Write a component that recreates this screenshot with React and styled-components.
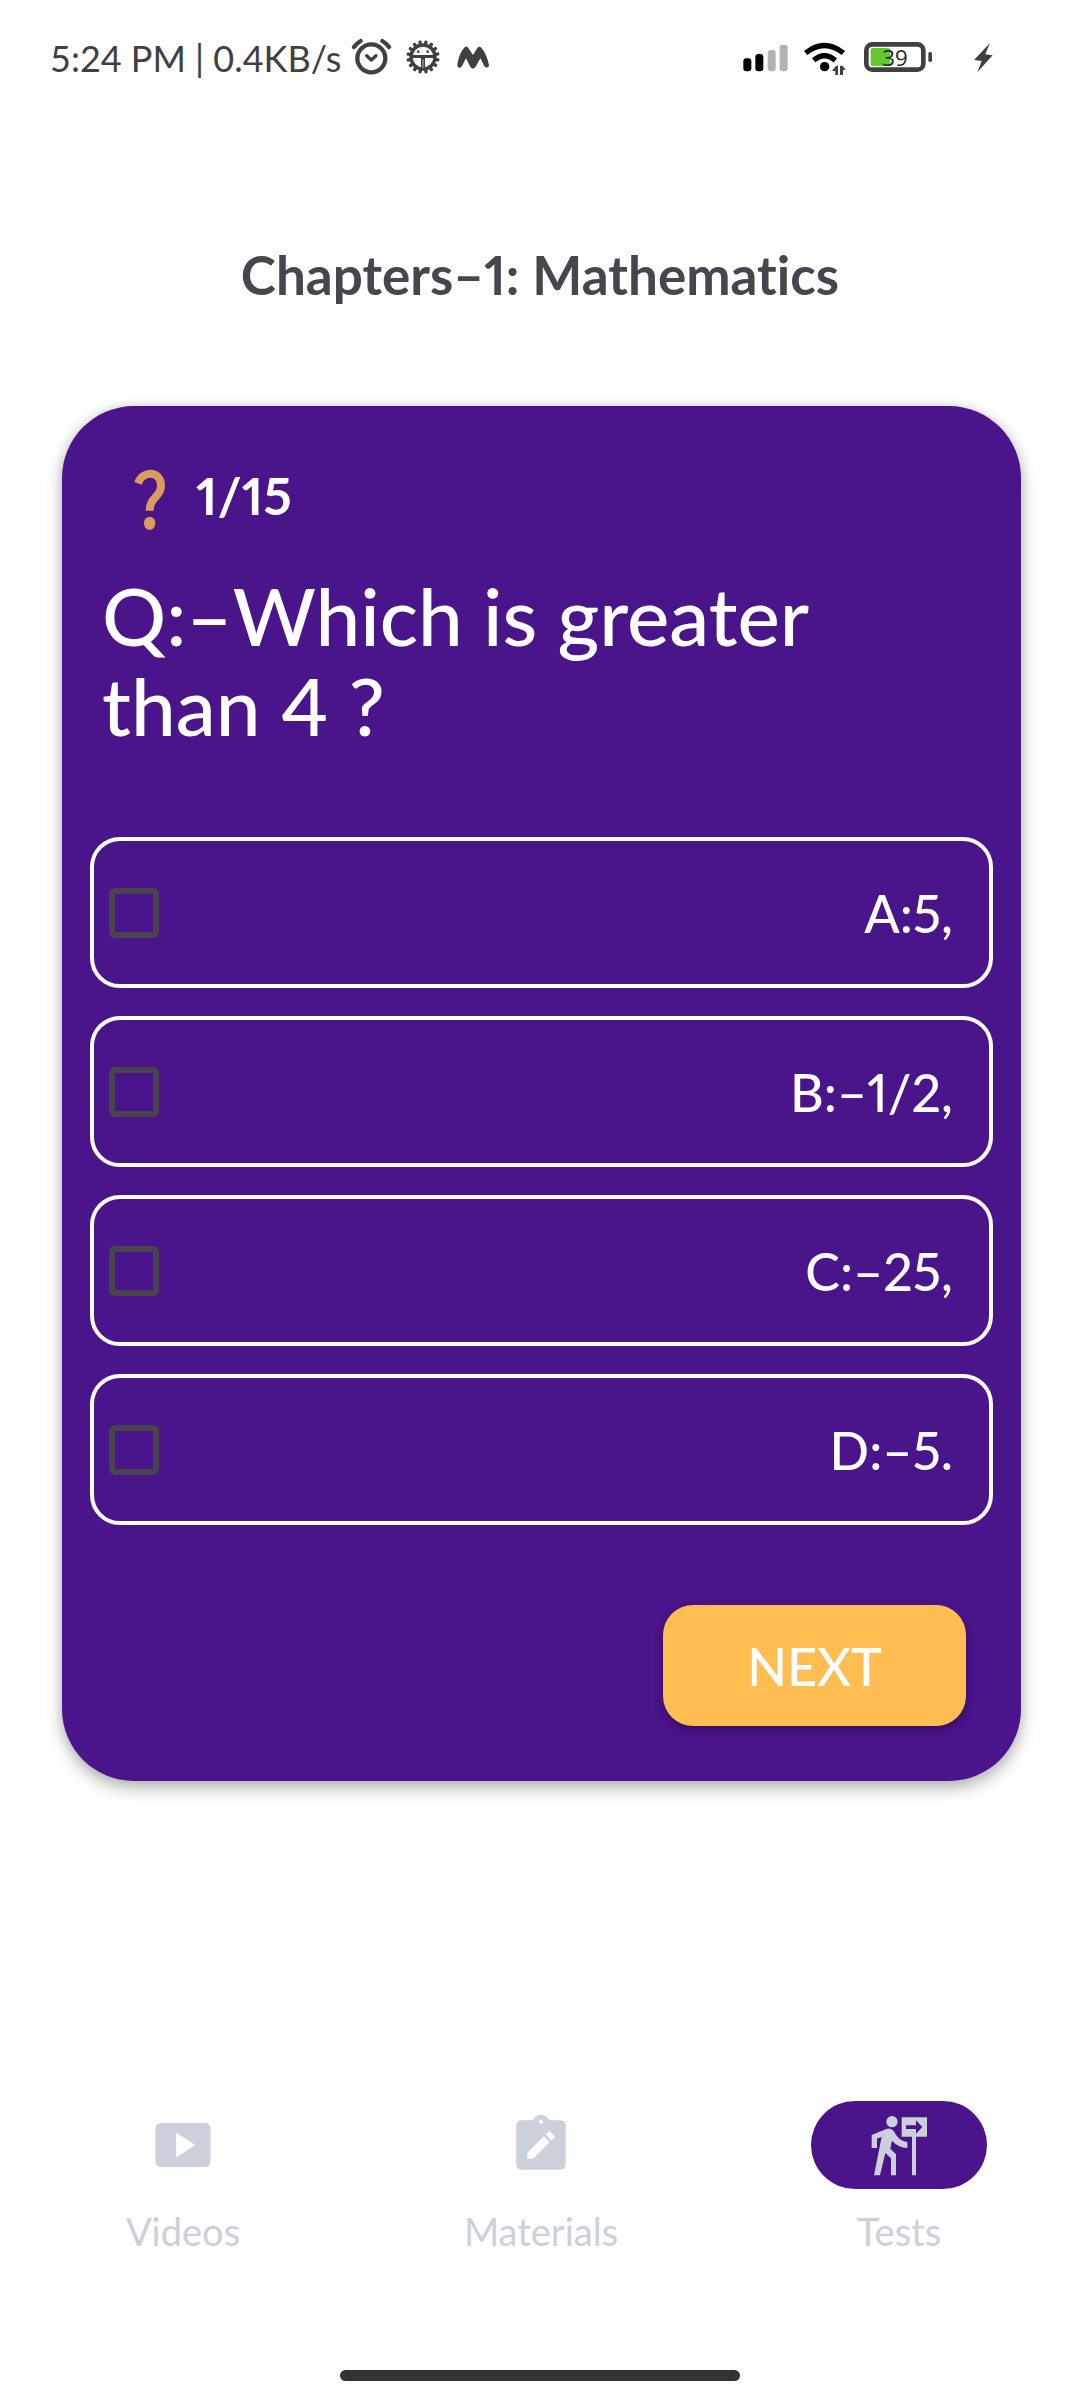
import React from "react";
import styled, { createGlobalStyle } from "styled-components";

const GlobalStyle = createGlobalStyle`
  *, *::before, *::after { box-sizing: border-box; }
  body {
    margin: 0;
    background: #fefefe;
    font-family: Lato, "Open Sans", sans-serif;
    font-variant-ligatures: none;
    font-variant-numeric: proportional-nums;
  }
`;

const Page = styled.div`
  min-height: 100vh;
  display: flex;
  flex-direction: column;
`;

const StatusBar = styled.div`
  height: 116px;
  padding: 0 80px 0 50px;
  display: flex;
  align-items: center;
  justify-content: space-between;
  color: #404040;
`;

const StatusGroup = styled.div`
  display: flex;
  align-items: center;
  gap: 8px;
`;

const StatusText = styled.span`
  font-size: 36px;
  line-height: 44px;
  white-space: nowrap;
  font-variant-numeric: tabular-nums;
`;

const StatusIcons = styled.svg`
  display: block;
  width: ${(p) => p.$width}px;
  height: 60px;
`;

const Title = styled.h1`
  margin: 127px 40px 99px;
  font-size: 53px;
  line-height: 64px;
  font-weight: 700;
  text-align: center;
  color: #49454f;
`;

const Main = styled.main`
  padding: 0 59px 0 62px;
`;

const Card = styled.form`
  display: flex;
  flex-direction: column;
  padding: 64px 28px 55px;
  border-radius: 72px;
  background: #4a148a;
  color: #ffffff;
  box-shadow: 0 8px 16px rgba(0, 0, 0, 0.24), 0 0 12px rgba(0, 0, 0, 0.14);
`;

const Progress = styled.div`
  height: 60px;
  padding-left: 42px;
  display: flex;
  align-items: center;
  gap: 28px;
`;

const QuestionMark = styled.svg`
  width: 36px;
  height: 62px;
`;

const Count = styled.span`
  font-size: 52px;
  line-height: 52px;
  padding-bottom: 10px;
  font-weight: 700;
`;

const Question = styled.h2`
  margin: 40px 80px 87px 12px;
  font-size: 80px;
  line-height: 90px;
  font-weight: 500;
`;

const Options = styled.div`
  display: flex;
  flex-direction: column;
  gap: 28px;
`;

const Option = styled.label`
  height: 151px;
  padding: 0 36px 0 15px;
  display: flex;
  align-items: center;
  justify-content: space-between;
  border: 4px solid #ffffff;
  border-radius: 30px;
  font-size: 52px;
  line-height: 64px;
  font-weight: 500;
  cursor: pointer;
`;

const Checkbox = styled.input`
  appearance: none;
  margin: 0;
  width: 50px;
  height: 50px;
  border: 6px solid #49454f;
  border-radius: 6px;
  &:checked {
    background: #ffbd52;
  }
`;

const NextButton = styled.button`
  align-self: flex-end;
  width: 303px;
  height: 121px;
  margin: 80px 27px 0 0;
  padding: 0;
  border: 0;
  border-radius: 30px;
  background: #ffbd52;
  color: #ffffff;
  font-family: inherit;
  font-size: 52px;
  font-weight: 500;
  box-shadow: 0 4px 8px rgba(0, 0, 0, 0.3);
  cursor: pointer;
`;

const Nav = styled.nav`
  margin-top: auto;
  padding: 40px 2px 0 4px;
  display: grid;
  grid-template-columns: repeat(3, 1fr);
`;

const NavLink = styled.a`
  display: flex;
  flex-direction: column;
  align-items: center;
  gap: 22px;
  color: #cbd0da;
  font-size: 38px;
  line-height: 40px;
  text-decoration: none;
`;

const Pill = styled.span`
  width: 176px;
  height: 88px;
  display: flex;
  align-items: center;
  justify-content: center;
  border-radius: 44px;
  background: ${(p) => (p.$active ? "#4a148a" : "transparent")};
`;

const NavIcon = styled.svg`
  width: 66px;
  height: 66px;
  fill: currentColor;
`;

const HomeBar = styled.div`
  width: 37%;
  height: 11px;
  margin: 119px auto 19px;
  border-radius: 6px;
  background: #333333;
`;

function LeftStatusIcons() {
  const teeth = Array.from({ length: 16 }, (_, i) => i * 22.5);
  return (
    <StatusIcons $width={144} viewBox="960 24 432 180" aria-hidden="true">
      <g fill="none" stroke="#404040" strokeWidth="13" strokeLinecap="round" strokeLinejoin="round">
        <circle cx="1027" cy="115" r="42" />
        <path d="M1013 107l14 13 14-13" strokeWidth="10" />
        <path d="M975 81q8-11 20-18M1080 81q-8-11-20-18" />
      </g>
      <circle cx="1182" cy="111" r="36" fill="none" stroke="#404040" strokeWidth="10" />
      {teeth.map((a) => (
        <rect key={a} x="1177" y="61" width="10" height="14" rx="4" fill="#404040" transform={`rotate(${a + 11} 1182 111)`} />
      ))}
      <path d="M1148 105h68v9h-28v34h-12v-34h-28z" fill="#404040" />
      <path d="M1182 118v26" stroke="#fefefe" strokeWidth="2" />
      <circle cx="1168" cy="95" r="4" fill="#404040" />
      <circle cx="1196" cy="95" r="4" fill="#404040" />
      <path
        fill="#404040"
        d="M1285 136c2-20 10-42 22-54 4-4 8-3 11 2l14 21 13-21c4-5 8-5 12-1 12 14 20 34 23 53 0 8-10 9-14 2l-12-23-14 25c-4 7-12 7-16 0l-13-25-12 23c-4 8-14 7-14-2z"
      />
    </StatusIcons>
  );
}

function RightStatusIcons() {
  return (
    <StatusIcons $width={260} viewBox="60 24 780 180" aria-label="Battery 39 percent, charging" role="img">
      <rect x="70" y="115" width="24" height="39" rx="9" />
      <rect x="106" y="102" width="24" height="52" rx="9" />
      <rect x="143" y="90" width="24" height="64" rx="9" fill="#b3b3b3" />
      <rect x="179" y="74" width="24" height="80" rx="9" fill="#b3b3b3" />
      <path d="M257 99Q313 54 370 99M281 121Q313 94 346 121" fill="none" stroke="#000" strokeWidth="16" />
      <circle cx="314" cy="140" r="14" />
      <path d="M336 153l12-16h6v28h-8v-12zM378 149h-9v16h-9v-28h7z" fill="#404040" />
      <rect x="439" y="73" width="171" height="76" rx="18" fill="none" stroke="#404040" strokeWidth="14" />
      <rect x="452" y="84" width="59" height="54" rx="6" fill="#64c92c" />
      <text x="525" y="137" textAnchor="middle" fontFamily="Open Sans, sans-serif" fontSize="67" fill="#262626">39</text>
      <rect x="625" y="96" width="11" height="30" rx="5" fill="#404040" />
      <path d="M810 69l-48 51 23 3-13 34 46-51-22-3z" fill="#404040" />
    </StatusIcons>
  );
}

const VideosIcon = () => (
  <NavIcon viewBox="0 0 24 24" aria-hidden="true">
    <path d="M20 4H4c-1.1 0-2 .9-2 2v12c0 1.1.9 2 2 2h16c1.1 0 2-.9 2-2V6c0-1.1-.9-2-2-2zM9.5 16.5v-9l7 4.5z" />
  </NavIcon>
);

const MaterialsIcon = () => (
  <NavIcon viewBox="0 0 24 24" aria-hidden="true">
    <path
      fillRule="evenodd"
      d="M19 3h-4.18C14.4 1.84 13.3 1 12 1s-2.4.84-2.82 2H5c-1.1 0-2 .9-2 2v14c0 1.1.9 2 2 2h14c1.1 0 2-.9 2-2V5c0-1.1-.9-2-2-2zm-7-.25a.75.75 0 1 1 0 1.5.75.75 0 0 1 0-1.5zM9.1 17H7v-2.14l5.96-5.96 2.12 2.12zM16.85 9.27l-1.06 1.06-2.12-2.12 1.06-1.06c.2-.2.51-.2.71 0l1.41 1.41c.2.2.2.51 0 .71z"
    />
  </NavIcon>
);

const TestsIcon = () => (
  <NavIcon viewBox="258 96 198 198" aria-hidden="true">
    <circle cx="336" cy="125" r="17" />
    <path
      fillRule="evenodd"
      d="M365 112h76v58h-33v116h-12V170h-31zM378 136v11h30v14l19-20-19-20v15z"
    />
    <path d="M275 165l44-18q14-5 22 6l8 13q12 18 33 20v18q-28-2-46-22l-5 24 17 17v63h-15v-51l-17-16-16 67h-18l23-116-14 6v28h-16z" />
  </NavIcon>
);

const OPTIONS = ["A:5,", "B:–1/2,", "C:–25,", "D:–5."];

const TABS = [
  { name: "Videos", Icon: VideosIcon },
  { name: "Materials", Icon: MaterialsIcon },
  { name: "Tests", Icon: TestsIcon, active: true },
];

export default function App() {
  return (
    <Page>
      <GlobalStyle />
      <StatusBar>
        <StatusGroup>
          <StatusText>5:24 PM | 0.4KB/s</StatusText>
          <LeftStatusIcons />
        </StatusGroup>
        <StatusGroup>
          <RightStatusIcons />
        </StatusGroup>
      </StatusBar>
      <Title>Chapters–1: Mathematics</Title>
      <Main>
        <Card onSubmit={(e) => e.preventDefault()}>
          <Progress>
            <QuestionMark viewBox="247 238 108 186" aria-hidden="true">
              <path
                d="M265 281C280 240 334 243 334 288C334 322 300 322 300 363"
                fill="none"
                stroke="#db9b5c"
                strokeWidth="24"
              />
              <ellipse cx="300" cy="401" rx="17" ry="20" fill="#db9b5c" />
            </QuestionMark>
            <Count>1/15</Count>
          </Progress>
          <Question>Q:–Which is greater than 4 ?</Question>
          <Options>
            {OPTIONS.map((text) => (
              <Option key={text}>
                <Checkbox type="checkbox" name="answer" value={text} />
                <span>{text}</span>
              </Option>
            ))}
          </Options>
          <NextButton type="submit">NEXT</NextButton>
        </Card>
      </Main>
      <Nav>
        {TABS.map(({ name, Icon, active }) => (
          <NavLink key={name} href={`#${name.toLowerCase()}`} aria-current={active ? "page" : undefined}>
            <Pill $active={active}>
              <Icon />
            </Pill>
            <span>{name}</span>
          </NavLink>
        ))}
      </Nav>
      <HomeBar />
    </Page>
  );
}
